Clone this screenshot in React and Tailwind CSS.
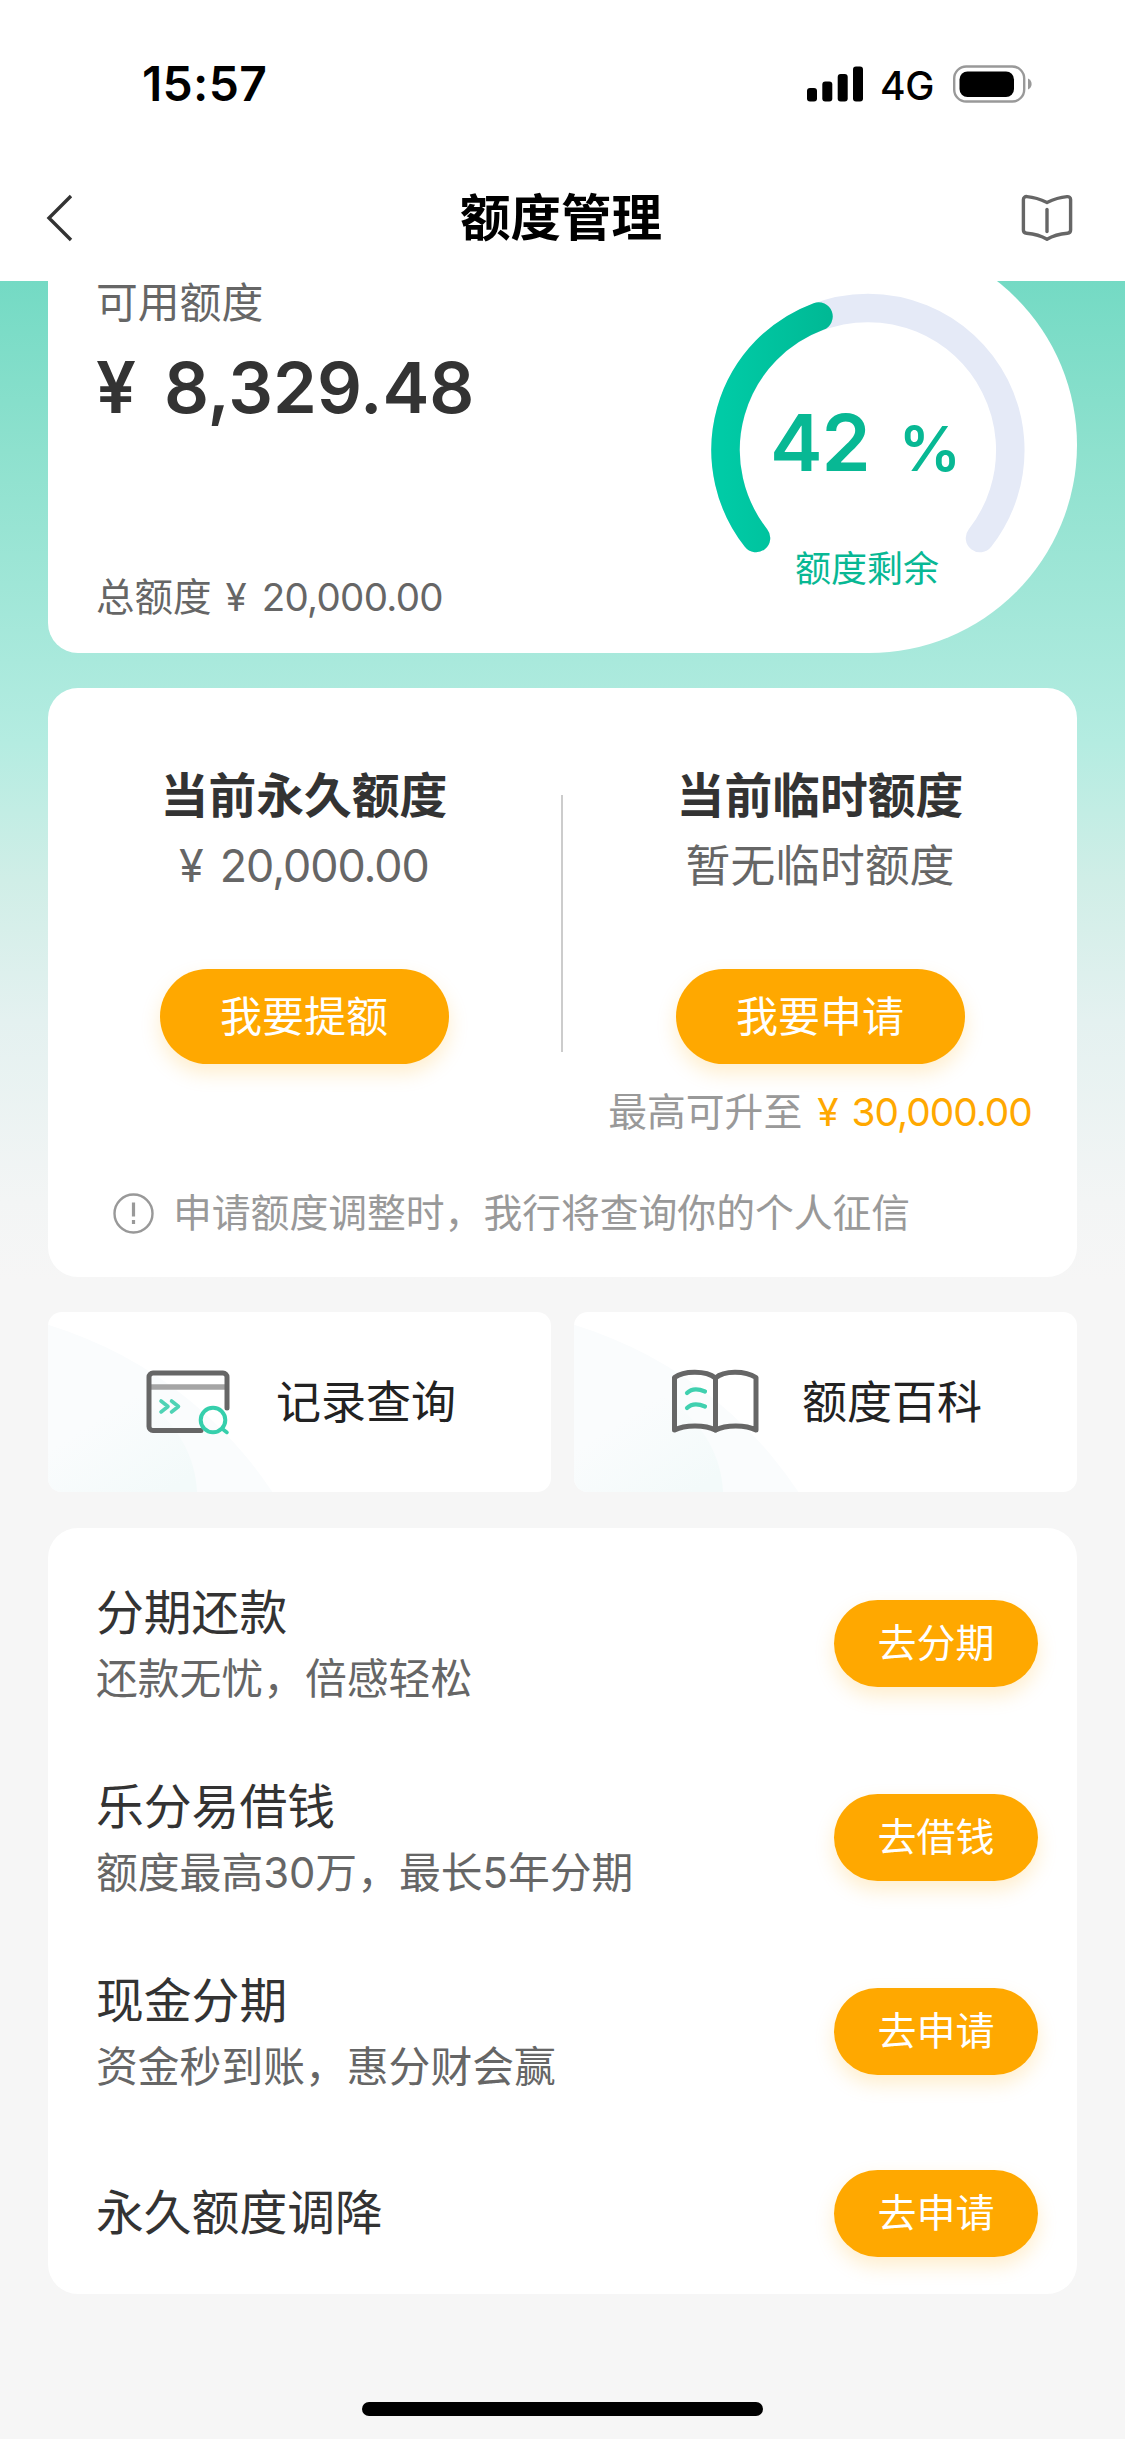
const services = [
  { title: '分期还款', desc: '还款无忧，倍感轻松', action: '去分期' },
  { title: '乐分易借钱', desc: '额度最高30万，最长5年分期', action: '去借钱' },
  { title: '现金分期', desc: '资金秒到账，惠分财会赢', action: '去申请' },
  { title: '永久额度调降', action: '去申请' },
];

function StatusBar() {
  return (
    <div className="flex h-[154px] items-center justify-between pt-[14px] pr-[92px] pl-[142px]">
      <span className="text-[48px] leading-none font-semibold tracking-[0.3px] text-black">15:57</span>
      <div className="flex items-center">
        <svg className="h-[36px] w-[56px]" viewBox="0 0 56 36">
          <rect x="0" y="22" width="10" height="13.5" rx="3" />
          <rect x="15.3" y="15.5" width="10" height="20" rx="3" />
          <rect x="30.7" y="8" width="10" height="27.5" rx="3" />
          <rect x="46" y="0.5" width="10" height="35" rx="3" />
        </svg>
        <span className="mt-[2px] ml-[17px] w-[53px] text-[39px] leading-none font-medium tracking-[-0.3px] text-black">4G</span>
        <svg className="ml-[20px] h-[38px] w-[80px]" viewBox="0 0 80 38">
          <rect x="1.2" y="1.5" width="70" height="35" rx="12" fill="none" stroke="#999" strokeWidth="2.4" />
          <rect x="6.5" y="6.5" width="54.5" height="25.5" rx="8" />
          <path d="M75 13.5c2.5 1 3.6 3.2 3.6 5.5s-1.1 4.5-3.6 5.5z" fill="#999" />
        </svg>
      </div>
    </div>
  );
}

function NavBar() {
  return (
    <div className="flex h-[127px] items-center justify-between pr-[50px] pl-[46px]">
      <svg className="h-[48px] w-[56px]" viewBox="0 0 56 48" fill="none" stroke="#333" strokeWidth="3.4">
        <path d="M25 2 3 24l22 22" />
      </svg>
      <h1 className="pl-[1px] text-[50.5px] leading-[64px] font-semibold text-black">额度管理</h1>
      <svg className="h-[48px] w-[56px]" viewBox="0 0 56 48" fill="none" stroke="#666" strokeWidth="3.4" strokeLinecap="round" strokeLinejoin="round">
        <path d="M28 8.5C22 5.5 15.5 3.2 8 2.6c-2-.2-3.6 1-3.6 3v30.5c0 2 1.2 3 3.2 3.2C15 40 22 41.8 28 45.2c6-3.4 13-5.2 20.4-5.9 2-.2 3.2-1.2 3.2-3.2V5.6c0-2-1.6-3.2-3.6-3C40.500 3.200 34 5.500 28 8.500z" />
        <path d="M28 15.5v22" />
      </svg>
    </div>
  );
}

function Gauge() {
  return (
    <div className="relative mt-[55px] h-[316px] w-[316px]">
      <svg className="h-full w-full" viewBox="0 0 316 316" fill="none" strokeWidth="28.5" strokeLinecap="round">
        <defs>
          <linearGradient id="gauge" gradientUnits="userSpaceOnUse" x1="0" y1="0" x2="125" y2="0">
            <stop offset="0.1" stopColor="#00cba6" />
            <stop offset="1" stopColor="#00b894" />
          </linearGradient>
        </defs>
        <path d="M46 246A142.3 142.3 0 1 1 270 246" stroke="#e5eaf7" />
        <path d="M46 246A142.3 142.3 0 0 1 108.5 24.5" stroke="url(#gauge)" />
      </svg>
      <div className="absolute inset-x-0 top-[107px] flex items-baseline pl-[60px] leading-[86px] text-[#08b894]">
        <span className="text-[79px] font-semibold tracking-[-1px]">42</span>
        <span className="ml-[29px] text-[62px] font-semibold">%</span>
      </div>
      <p className="absolute inset-x-0 top-[250px] -ml-[2px] text-center text-[36px] leading-[54px] text-[#08b894]">额度剩余</p>
    </div>
  );
}

function BalanceCard() {
  return (
    <section className="-mt-[44px] flex h-[416px] justify-between rounded-l-[30px] rounded-r-[208px] bg-white pr-[51px] pl-[48px]">
      <div className="flex flex-col pt-[36px] pb-[26px] text-[#666]">
        <p className="text-[41.8px] leading-[60px]">可用额度</p>
        <p className="mt-[12px] text-[71px] leading-[84px] font-semibold text-[#333]">
          ¥<span className="ml-[28px] text-[70.4px]">8,329.48</span>
        </p>
        <p className="mt-auto text-[38.5px] leading-[60px]">
          总额度<span className="ml-[14px]">¥</span><span className="ml-[15px] tracking-[-0.7px]">20,000.00</span>
        </p>
      </div>
      <Gauge />
    </section>
  );
}

function QuotaColumn({ title, value, action, children }) {
  return (
    <div className="flex flex-1 flex-col items-center">
      <h2 className="text-[47.8px] leading-[66px] font-bold text-[#333]">{title}</h2>
      <p className="mt-[7px] text-[44.8px] leading-[60px] text-[#666]">{value}</p>
      <button className="mt-[73px] h-[95px] w-[289px] rounded-full bg-[#ffa800] text-[42px] text-white shadow-[0_9px_20px_rgba(255,168,0,0.2)]">
        {action}
      </button>
      {children}
    </div>
  );
}

function QuotaCard() {
  return (
    <section className="mt-[35px] h-[589px] rounded-[30px] bg-white pt-[75px]">
      <div className="-ml-[1px] flex h-[380px]">
        <QuotaColumn title="当前永久额度" value={<>¥<span className="ml-[16px] tracking-[-1px]">20,000.00</span></>} action="我要提额" />
        <div className="mt-[32px] h-[257px] w-[2px] bg-[#ccc]" />
        <QuotaColumn title="当前临时额度" value="暂无临时额度" action="我要申请">
          <p className="mt-[18px] text-[38.8px] leading-[60px] whitespace-nowrap text-[#999]">
            最高可升至
            <span className="ml-[15px] text-[#ffa800]">¥<span className="ml-[13px] tracking-[-1px]">30,000.00</span></span>
          </p>
        </QuotaColumn>
      </div>
      <div className="mt-[40px] flex items-center pl-[65px] text-[#999]">
        <svg className="h-[41px] w-[41px]" viewBox="0 0 41 41" fill="none" stroke="currentColor" strokeWidth="2.4">
          <circle cx="20.5" cy="20.5" r="19" />
          <path d="M20.5 9.5v14M20.5 27v4" strokeWidth="3.2" />
        </svg>
        <p className="ml-[19px] text-[38.8px] leading-[60px]">申请额度调整时，我行将查询你的个人征信</p>
      </div>
    </section>
  );
}

function RecordIcon() {
  return (
    <svg className="h-[68px] w-[92px]" viewBox="0 0 92 68" fill="none" strokeLinecap="round" strokeLinejoin="round">
      <path d="M8 19h74" stroke="#a5a5a5" strokeWidth="5.5" />
      <path d="M58 62.5H10a4 4 0 0 1-4-4V9a4 4 0 0 1 4-4h70a4 4 0 0 1 4 4v31" stroke="#666" strokeWidth="5" />
      <path d="m18 33 7 5.5-7 5.5M28.5 33l7 5.5-7 5.5" stroke="#4fd3b5" strokeWidth="3.6" />
      <circle cx="70" cy="52" r="12.3" stroke="#36cfac" strokeWidth="4" />
      <path d="m79.5 61 4.500 3.500" stroke="#36cfac" strokeWidth="3.6" />
    </svg>
  );
}

function BookIcon() {
  return (
    <svg className="h-[68px] w-[92px]" viewBox="0 0 92 68" fill="none" strokeLinecap="round" strokeLinejoin="round">
      <g stroke="#666" strokeWidth="5">
        <path d="M46.5 10C37 2.500 15 2.500 5.500 9.500V62c10-5.500 31-5.500 41 0" />
        <path d="M46.5 10C55 2.500 76 2.500 87 9.500V62c-10-5.500-30.500-5.500-40.500 0z" />
      </g>
      <path d="M18 25c4.500-4.500 11-4.500 18-1.500M18 40c4.500-4.500 11-4.500 18-1.500" stroke="#40d0af" strokeWidth="4.2" />
    </svg>
  );
}

function Shortcut({ id, icon, label }) {
  return (
    <button className="relative flex h-[180px] flex-1 items-center overflow-hidden rounded-[14px] bg-white pl-[95px]">
      <svg className="absolute inset-0 h-[180px] w-[240px]" viewBox="0 0 240 180">
        <defs>
          <linearGradient id={id} x1="0" y1="0" x2="0.8" y2="1">
            <stop offset="0.4" stopColor="#f3fafa" stopOpacity="0" />
            <stop offset="1" stopColor="#f3fafa" />
          </linearGradient>
        </defs>
        <circle cx="-120" cy="408" r="413" fill="#fafcfd" />
        <path d="M0 60C80 60 146 110 149 180H0z" fill={`url(#${id})`} />
      </svg>
      <span className="relative flex items-center">
        {icon}
        <span className="mt-[2px] ml-[41px] text-[45px] leading-[60px] text-[#222]">{label}</span>
      </span>
    </button>
  );
}

function ServiceRow({ title, desc, action }) {
  return (
    <li className={desc ? 'flex h-[194px] items-center justify-between' : 'flex h-[170px] items-center justify-between'}>
      <div className={desc ? 'pt-[5px]' : ''}>
        <h3 className="text-[47.8px] leading-[66px] text-[#333]">{title}</h3>
        {desc && <p className="text-[41.8px] leading-[66px] text-[#666]">{desc}</p>}
      </div>
      <button className="h-[87px] w-[204px] rounded-full bg-[#ffa800] text-[39px] text-white shadow-[0_9px_20px_rgba(255,168,0,0.2)]">
        {action}
      </button>
    </li>
  );
}

function App() {
  return (
    <div className="flex h-[2439px] w-[1125px] flex-col overflow-hidden bg-[#f6f6f6] font-[Inter,'Noto_Sans_CJK_SC',sans-serif]">
      <header className="relative z-10 bg-white">
        <StatusBar />
        <NavBar />
      </header>

      <main className="flex-1 bg-[linear-gradient(180deg,#74dac4_0px,#8ee1ce_170px,#a9e9dc_380px,#b4ece1_460px,#d0eee7_600px,#e4f1f0_740px,#f3f5f5_920px,#f6f6f6_1000px)] px-[48px]">
        <BalanceCard />
        <QuotaCard />

        <div className="mt-[35px] flex gap-[23px]">
          <Shortcut id="tint-record" icon={<RecordIcon />} label="记录查询" />
          <Shortcut id="tint-wiki" icon={<BookIcon />} label="额度百科" />
        </div>

        <ul className="mt-[36px] h-[766px] rounded-[30px] bg-white pt-[18px] pr-[39px] pl-[48px]">
          {services.map((item) => (
            <ServiceRow key={item.title} {...item} />
          ))}
        </ul>
      </main>

      <div className="mb-[23px] h-[14px] w-[401px] self-center rounded-full bg-black" />
    </div>
  );
}

export default App;
